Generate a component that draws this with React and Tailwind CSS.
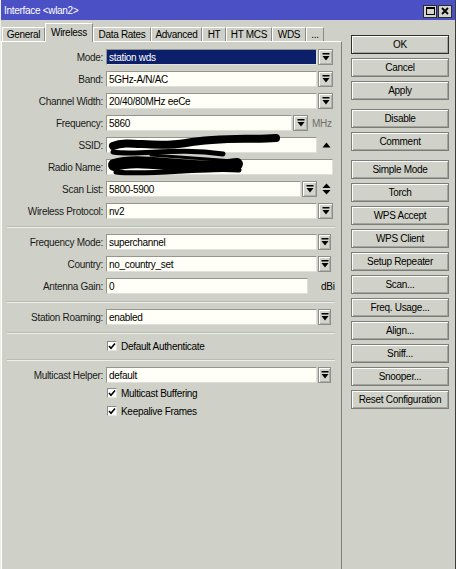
import React from 'react';

const font = { fontFamily: '"Liberation Sans", Arial, sans-serif' };

function DropIcon() {
  return (
    <svg width="8" height="8" viewBox="0 0 8 8">
      <rect x="0.5" y="0" width="7" height="1.5" fill="#000" />
      <polygon points="0.5,3 7.5,3 4,7.5" fill="#000" />
    </svg>
  );
}

function DropButton({ w = 'w-[15px]' }) {
  return (
    <div
      className={`ml-[1px] flex h-[16px] ${w} items-center justify-center border border-[#8d8e88] bg-[#d3d5cc] shadow-[inset_1px_1px_0_#ffffff,inset_-1px_-1px_0_#b0b1aa]`}
    >
      <DropIcon />
    </div>
  );
}

function Field({ value, w, selected }) {
  return (
    <div
      className={`flex h-[16px] ${w} items-center overflow-hidden whitespace-nowrap border border-[#94958f] border-b-[#dfe0da] border-r-[#dfe0da] px-[2px] ${
        selected ? 'bg-[#0b1f6b] text-white' : 'bg-[#fffff7] text-black'
      }`}
    >
      {value}
    </div>
  );
}

function Row({ label, children }) {
  return (
    <div className="flex h-[22px] items-center">
      <div className="w-[101px] text-right text-[#1a1a1a]">{label}:</div>
      <div className="ml-[3px] flex items-center">{children}</div>
    </div>
  );
}

function Separator() {
  return (
    <div className="flex h-[9px] flex-col pl-[5px] pr-[6px] pt-[4px]">
      <div className="h-[1px] bg-[#b9bab3]" />
      <div className="h-[1px] bg-[#eeefe9]" />
    </div>
  );
}

function Check({ label }) {
  return (
    <div className="flex h-[18px] items-center pl-[105px]">
      <div className="flex h-[10px] w-[10px] items-center justify-center border border-[#8a8b86] border-b-[#e4e5df] border-r-[#e4e5df] bg-white">
        <svg width="8" height="8" viewBox="0 0 8 8">
          <polyline points="1,4 3,6.3 7,1.5" fill="none" stroke="#000" strokeWidth="1.6" />
        </svg>
      </div>
      <span className="ml-[4px]">{label}</span>
    </div>
  );
}

function UpArrow() {
  return (
    <svg width="9" height="6" viewBox="0 0 9 6">
      <polygon points="0.5,5.5 8.5,5.5 4.5,0.5" fill="#000" />
    </svg>
  );
}

function UpDown() {
  return (
    <svg width="9" height="12" viewBox="0 0 9 12">
      <polygon points="0.5,5 8.5,5 4.5,0.5" fill="#000" />
      <polygon points="0.5,7 8.5,7 4.5,11.5" fill="#000" />
    </svg>
  );
}

const tabs = [
  ['General', 'w-[43px]'],
  ['Wireless', 'w-[48px]'],
  ['Data Rates', 'w-[58px]'],
  ['Advanced', 'w-[51px]'],
  ['HT', 'w-[24px]'],
  ['HT MCS', 'w-[46px]'],
  ['WDS', 'w-[34px]'],
  ['...', 'w-[18px]'],
];

const buttons = [
  ['OK', 'Cancel', 'Apply'],
  ['Disable', 'Comment'],
  [
    'Simple Mode',
    'Torch',
    'WPS Accept',
    'WPS Client',
    'Setup Repeater',
    'Scan...',
    'Freq. Usage...',
    'Align...',
    'Sniff...',
    'Snooper...',
    'Reset Configuration',
  ],
];

export default function App() {
  return (
    <div
      style={font}
      className="relative flex h-[569px] w-[456px] flex-col overflow-hidden border-l border-r border-l-[#eceee7] border-r-[#3c3c3c] bg-[#cfd1c8] text-[10px] tracking-[-0.3px] text-black"
    >
      {/* title bar */}
      <div className="flex h-[20px] items-center justify-between bg-[#4b50c4] pl-[3px] pr-[3px] text-white">
        <span>Interface &lt;wlan2&gt;</span>
        <div className="mt-[2px] flex gap-[1px]">
          <div className="flex h-[13px] w-[14px] items-center justify-center border border-[#2b2b2b] bg-[#d4d5cd]">
            <div className="h-[8px] w-[9px] border border-t-2 border-black" />
          </div>
          <div className="flex h-[13px] w-[14px] items-center justify-center border border-[#2b2b2b] bg-[#d4d5cd]">
            <svg width="8" height="8" viewBox="0 0 8 8">
              <path d="M1 1 L7 7 M7 1 L1 7" stroke="#000" strokeWidth="1.8" />
            </svg>
          </div>
        </div>
      </div>

      <div className="flex flex-1">
        {/* left: tabs + panel */}
        <div className="flex w-[341px] flex-col">
          <div className="flex h-[21px] items-end pl-[1px]">
            {tabs.map(([t, w]) => {
              const active = t === 'Wireless';
              return (
                <div
                  key={t}
                  className={`${w} relative flex items-center justify-center whitespace-nowrap border-l border-r border-t border-l-white border-r-[#8a8b86] border-t-white ${
                    active ? 'z-10 -mb-[1px] h-[19px] bg-[#cfd1c8] pb-[2px]' : 'h-[14px]'
                  }`}
                >
                  {t}
                </div>
              );
            })}
          </div>
          <div className="flex-1 border-l border-r border-t border-l-white border-r-[#80817c] border-t-white pt-[4px]">
            <Row label="Mode">
              <Field value="station wds" w="w-[211px]" selected />
              <DropButton />
            </Row>
            <Row label="Band">
              <Field value="5GHz-A/N/AC" w="w-[211px]" />
              <DropButton />
            </Row>
            <Row label="Channel Width">
              <Field value="20/40/80MHz eeCe" w="w-[211px]" />
              <DropButton />
            </Row>
            <Row label="Frequency">
              <Field value="5860" w="w-[186px]" />
              <DropButton />
              <span className="ml-[4px] text-[#6e6f6a]">MHz</span>
            </Row>
            <Row label="SSID">
              <Field value="" w="w-[211px]" />
              <div className="ml-[3px] flex w-[12px] justify-center">
                <UpArrow />
              </div>
            </Row>
            <Row label="Radio Name">
              <Field value="" w="w-[227px]" />
            </Row>
            <Row label="Scan List">
              <Field value="5800-5900" w="w-[195px]" />
              <DropButton />
              <div className="ml-[3px] flex w-[12px] justify-center">
                <UpDown />
              </div>
            </Row>
            <Row label="Wireless Protocol">
              <Field value="nv2" w="w-[211px]" />
              <DropButton />
            </Row>
            <Separator />
            <Row label="Frequency Mode">
              <Field value="superchannel" w="w-[211px]" />
              <DropButton w="w-[13px]" />
            </Row>
            <Row label="Country">
              <Field value="no_country_set" w="w-[211px]" />
              <DropButton w="w-[13px]" />
            </Row>
            <Row label="Antenna Gain">
              <Field value="0" w="w-[202px]" />
              <span className="ml-[13px]">dBi</span>
            </Row>
            <Separator />
            <Row label="Station Roaming">
              <Field value="enabled" w="w-[211px]" />
              <DropButton w="w-[13px]" />
            </Row>
            <Separator />
            <Check label="Default Authenticate" />
            <Separator />
            <Row label="Multicast Helper">
              <Field value="default" w="w-[211px]" />
              <DropButton w="w-[13px]" />
            </Row>
            <div className="-mt-[2px]">
              <Check label="Multicast Buffering" />
              <Check label="Keepalive Frames" />
            </div>
          </div>
        </div>

        {/* right: buttons */}
        <div className="flex flex-col pl-[9px] pt-[15px]">
          {buttons.map((group, gi) => (
            <div key={gi} className={`flex flex-col gap-[4px] ${gi > 0 ? 'mt-[9px]' : ''}`}>
              {group.map((b) => (
                <div
                  key={b}
                  className={`flex h-[19px] w-[98px] items-center justify-center border bg-[#d0d2c9] shadow-[inset_1px_1px_0_#ffffff,inset_-1px_-1px_0_#a3a49d] ${
                    b === 'OK' ? 'border-[#2e2e2e]' : 'border-[#7c7d78]'
                  }`}
                >
                  {b}
                </div>
              ))}
            </div>
          ))}
        </div>
      </div>

      {/* redaction scribbles over SSID / Radio Name */}
      <svg
        className="pointer-events-none absolute left-0 top-0"
        width="300"
        height="190"
        viewBox="0 0 300 190"
      >
        <g fill="none" stroke="#000" strokeLinecap="round" strokeLinejoin="round">
          <path d="M112 146 C 128 139, 150 149, 185 143 S 245 140, 275 138" strokeWidth="8" />
          <path d="M112 152 C 138 156, 175 147, 222 154" strokeWidth="5" />
          <path d="M113 165 C 142 156, 185 172, 236 164" strokeWidth="12" />
          <path d="M115 172 C 150 176, 200 167, 238 170" strokeWidth="5" />
          <path d="M150 155 C 180 157, 205 159, 232 161" strokeWidth="3" />
        </g>
      </svg>
    </div>
  );
}
